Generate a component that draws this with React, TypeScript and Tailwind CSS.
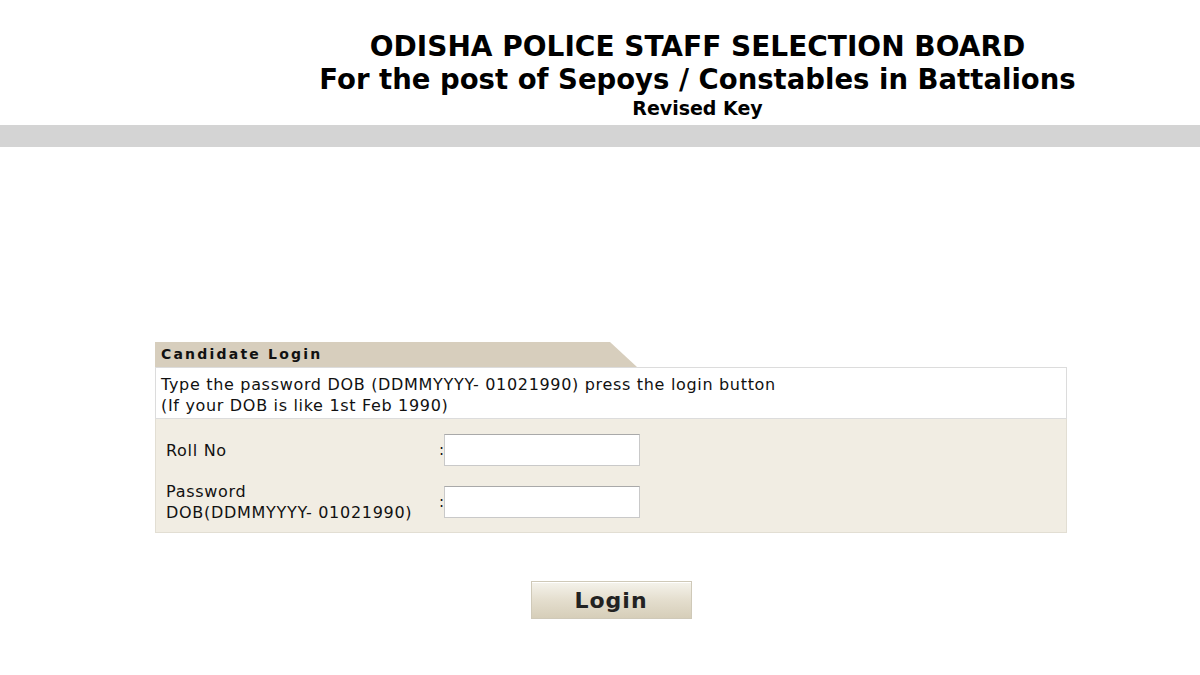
import React from "react";

// Candidate login page: header, grey rule, tabbed login form and button.
function Header() {
  return (
    <div className="pl-[195px] pt-[30px] text-center text-black [font-family:'DejaVu_Sans',sans-serif] font-bold">
      <div className="text-[28px] leading-[33px]">ODISHA POLICE STAFF SELECTION BOARD</div>
      <div className="text-[27.5px] leading-[33px]">For the post of Sepoys / Constables in Battalions</div>
      <div className="mt-[1px] text-[19px] leading-[22px]">Revised Key</div>
    </div>
  );
}

function Field({ label, sub }: { label: string; sub?: string }) {
  return (
    <div className="flex items-center">
      <div className="w-[273px] text-[16px] leading-[21px] tracking-[0.7px]">
        <div>{label}</div>
        {sub && <div>{sub}</div>}
      </div>
      <span className="w-[5px] text-[15px] leading-none">:</span>
      <input
        type="text"
        className="h-[32px] w-[196px] border border-[#c9c9c9] border-t-[#a9a9a9] bg-white outline-none"
      />
    </div>
  );
}

export default function App() {
  return (
    <div className="min-h-[675px] bg-white [font-family:'DejaVu_Sans',Verdana,sans-serif] text-[#111]">
      <Header />
      <div className="mt-[6px] h-[22px] bg-[#d4d4d4]" />

      <div className="mt-[195px] ml-[155px] w-[912px]">
        <div
          className="h-[25px] w-[482px] bg-[#d7cebd] pl-[6px] text-[14px] font-bold leading-[25px] tracking-[2.2px]"
          style={{ clipPath: "polygon(0 0, 455px 0, 482px 25px, 0 25px)" }}
        >
          Candidate Login
        </div>
        <div className="h-[52px] border border-[#dcdcdc] bg-white px-[5px] pt-[6px] text-[16px] leading-[21px] tracking-[0.68px]">
          <div>Type the password DOB (DDMMYYYY- 01021990) press the login button</div>
          <div>(If your DOB is like 1st Feb 1990)</div>
        </div>
        <div className="flex h-[114px] flex-col gap-[15px] border border-t-0 border-[#e2ded3] bg-[#f1ede3] pl-[10px] pt-[15px]">
          <Field label="Roll No" />
          <Field label="Password" sub="DOB(DDMMYYYY- 01021990)" />
        </div>
      </div>

      <div className="mt-[48px] flex justify-center pl-[22px]">
        <button className="h-[38px] w-[161px] border border-[#cfc9b8] bg-gradient-to-b from-[#f5f3ec] via-[#e4dece] to-[#d6ceb9] text-[22px] font-bold tracking-[1px] text-[#222] shadow-[inset_0_1px_0_#fff]">
          Login
        </button>
      </div>
    </div>
  );
}
